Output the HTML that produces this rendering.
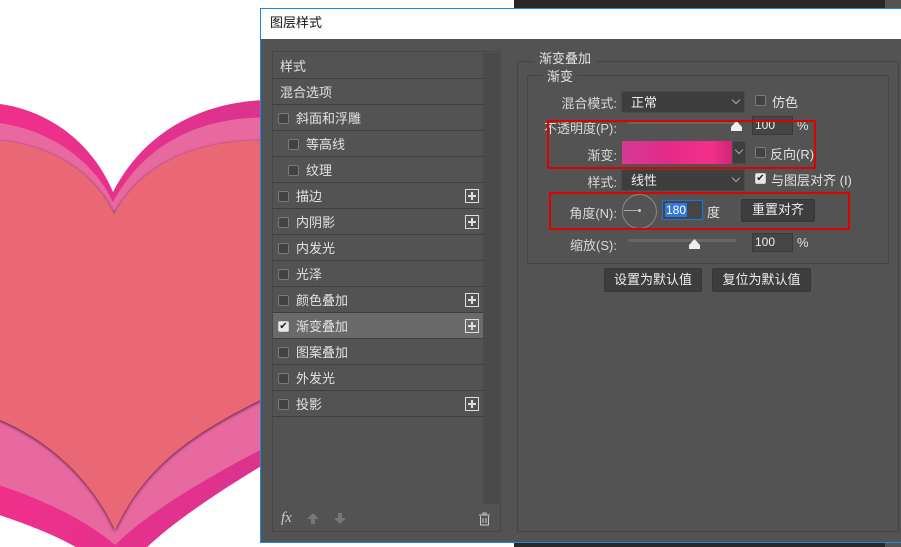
<!DOCTYPE html>
<html><head><meta charset="utf-8"><style>
*{margin:0;padding:0;box-sizing:border-box}
body{width:901px;height:547px;position:relative;overflow:hidden;background:#fff;font-family:"Liberation Sans","Noto Sans CJK SC",sans-serif;font-size:13px;color:#e2e2e2}
.a{position:absolute}
.row{position:absolute;left:273px;width:210px;height:26px;border-bottom:1px solid #3e3e3e;line-height:27px}
.row .cb{top:8px}
.cb{position:absolute;width:11px;height:11px;border:1px solid #7a7a7a;border-radius:2px;background:#424242}
.plus{position:absolute;right:4px;top:6px;width:14px;height:14px;border:1px solid #ddd;}
.plus:before{content:"";position:absolute;left:2px;top:5px;width:8px;height:2px;background:#ddd}
.plus:after{content:"";position:absolute;left:5px;top:2px;width:2px;height:8px;background:#ddd}
.dd{position:absolute;background:#3e3e3e;border:1px solid #4a4a4a;border-radius:2px;line-height:21px;padding-left:9px;color:#eee}
.dd i{position:absolute;right:5px;top:5px;width:6px;height:6px;border-right:1px solid #aaa;border-bottom:1px solid #aaa;transform:rotate(45deg)}
.in{position:absolute;background:#454545;border:1px solid #3a3a3a;line-height:17px;padding-left:2px;font-size:12px;color:#eee}
.btn{position:absolute;background:#3d3d3d;border:1px solid #363636;border-radius:2px;text-align:center;line-height:20px;color:#eee}
.lbl{position:absolute;text-align:right;color:#d8d8d8}
.red{position:absolute;border:2px solid #e00000}
</style></head><body>
<svg class="a" style="left:0;top:0" width="270" height="547">
<defs><linearGradient id="g" x1="0" x2="1"><stop offset="0" stop-color="#f0308a"/><stop offset="1" stop-color="#d9338f"/></linearGradient>
<filter id="s"><feDropShadow dx="0" dy="1" stdDeviation="1.5" flood-color="#3a1020" flood-opacity="0.9"/></filter></defs>
<path d="M113,192 C150,120 220,98 280,100 L280,455 C220,490 160,530 135,560 L95,560 C70,540 30,525 -10,512 L-10,103 C40,106 90,137 113,192Z" fill="url(#g)"/>
<path d="M113,202 C150,134 215,114 280,118 L280,440 C220,470 150,510 115,545 C80,515 30,495 -10,482 L-10,122 C40,126 90,154 113,202Z" fill="#e868a0"/>
<path d="M114,214 C150,152 215,138 280,141 L280,390 C210,425 150,455 115,530 C85,465 30,430 -10,416 L-10,140 C40,142 90,165 114,214Z" fill="#ea6874" filter="url(#s)"/>
</svg>
<div class="a" style="left:514px;top:0;width:371px;height:8px;background:#282828"></div>
<div class="a" style="left:885px;top:0;width:16px;height:8px;background:#535353"></div>
<div class="a" style="left:514px;top:543px;width:371px;height:4px;background:#282828"></div>
<div class="a" style="left:885px;top:543px;width:16px;height:4px;background:#535353"></div>
<div class="a" style="left:260px;top:8px;width:645px;height:535px;border:1px solid #1e88e5;background:#535353">
<div class="a" style="left:0;top:0;width:100%;height:30px;background:#fff;color:#111;font-size:13px;line-height:28px;padding-left:9px">图层样式</div>
</div>
<div class="a" style="left:272px;top:51px;width:229px;height:481px;border:1px solid #474747"></div>
<div class="a" style="left:483px;top:53px;width:16px;height:451px;background:#4a4a4a"></div>
<div class="row" style="top:53px;padding-left:7px">样式</div>
<div class="row" style="top:79px;padding-left:7px">混合选项</div>
<div class="row" style="top:105px"><span class="cb" style="left:5px"></span><span class="a" style="left:23px">斜面和浮雕</span></div>
<div class="row" style="top:131px"><span class="cb" style="left:15px"></span><span class="a" style="left:33px">等高线</span></div>
<div class="row" style="top:157px"><span class="cb" style="left:15px"></span><span class="a" style="left:33px">纹理</span></div>
<div class="row" style="top:183px"><span class="cb" style="left:5px"></span><span class="a" style="left:23px">描边</span><span class="plus"></span></div>
<div class="row" style="top:209px"><span class="cb" style="left:5px"></span><span class="a" style="left:23px">内阴影</span><span class="plus"></span></div>
<div class="row" style="top:235px"><span class="cb" style="left:5px"></span><span class="a" style="left:23px">内发光</span></div>
<div class="row" style="top:261px"><span class="cb" style="left:5px"></span><span class="a" style="left:23px">光泽</span></div>
<div class="row" style="top:287px"><span class="cb" style="left:5px"></span><span class="a" style="left:23px">颜色叠加</span><span class="plus"></span></div>
<div class="row" style="top:313px;background:#6a6a6a"><span class="cb" style="left:5px;background:#e8e8e8;border-color:#ccc;color:#222;font-size:10px;line-height:9px;text-align:center">✔</span><span class="a" style="left:23px">渐变叠加</span><span class="plus"></span></div>
<div class="row" style="top:339px"><span class="cb" style="left:5px"></span><span class="a" style="left:23px">图案叠加</span></div>
<div class="row" style="top:365px"><span class="cb" style="left:5px"></span><span class="a" style="left:23px">外发光</span></div>
<div class="row" style="top:391px"><span class="cb" style="left:5px"></span><span class="a" style="left:23px">投影</span><span class="plus"></span></div>
<div class="a" style="left:281px;top:510px;font-style:italic;font-family:'Liberation Serif',serif;font-size:15px;color:#ccc">fx</div>
<svg class="a" style="left:306px;top:512px" width="40" height="14"><path d="M7,1 L13,7 H9 V12 H5 V7 H1Z" fill="#777"/><path d="M34,12 L40,6 H36 V1 H32 V6 H28Z" fill="#777"/></svg>
<svg class="a" style="left:478px;top:512px" width="14" height="14"><path d="M1,3H12M5,3V1H8V3M2.5,4V13H10.5V4M5,6V11M8,6V11" stroke="#ccc" fill="none"/></svg>
<div class="a" style="left:517px;top:61px;width:382px;height:471px;border:1px solid #454545"></div>
<div class="a" style="left:534px;top:48px;background:#535353;padding:0 5px;font-size:13px">渐变叠加</div>
<div class="a" style="left:527px;top:75px;width:362px;height:189px;border:1px solid #454545"></div>
<div class="a" style="left:543px;top:66px;background:#535353;padding:0 4px;font-size:13px">渐变</div>
<div class="lbl" style="left:530px;top:93px;width:87px">混合模式:</div>
<div class="dd" style="left:621px;top:91px;width:124px;height:22px">正常<i></i></div>
<span class="cb" style="left:755px;top:95px"></span><span class="a" style="left:772px;top:92px">仿色</span>
<div class="lbl" style="left:530px;top:118px;width:87px">不透明度(P):</div>
<div class="a" style="left:628px;top:121px;width:108px;height:3px;background:#666"></div>
<svg class="a" style="left:730px;top:121px" width="13" height="11"><path d="M6.5,0 L12,6 V10 H1 V6Z" fill="#eee"/></svg>
<div class="in" style="left:752px;top:116px;width:41px;height:19px">100</div><span class="a" style="left:797px;top:118px">%</span>
<div class="lbl" style="left:530px;top:145px;width:87px">渐变:</div>
<div class="a" style="left:622px;top:141px;width:111px;height:23px;background:linear-gradient(90deg,#d63a95,#e42a88 40%,#f52e8a 80%,#cc2677)"></div>
<div class="dd" style="left:732px;top:141px;width:14px;height:23px;padding:0"><i style="right:3px"></i></div>
<span class="cb" style="left:755px;top:147px"></span><span class="a" style="left:770px;top:144px">反向(R)</span>
<div class="lbl" style="left:530px;top:172px;width:87px">样式:</div>
<div class="dd" style="left:621px;top:169px;width:124px;height:22px">线性<i></i></div>
<span class="cb" style="left:755px;top:173px;background:#e8e8e8;border-color:#ccc;color:#222;font-size:10px;line-height:9px;text-align:center">✔</span><span class="a" style="left:771px;top:170px">与图层对齐 (I)</span>
<div class="lbl" style="left:530px;top:203px;width:87px">角度(N):</div>
<div class="a" style="left:622px;top:194px;width:35px;height:35px;border:1px solid #888;border-radius:50%"></div>
<div class="a" style="left:624px;top:210px;width:16px;height:1px;background:#aaa"></div>
<div class="a" style="left:638px;top:209px;width:3px;height:3px;background:#ccc;border-radius:50%"></div>
<div class="a" style="left:662px;top:200px;width:41px;height:20px;border:1px solid #1a73e8;background:#454545"><span style="position:absolute;left:2px;top:2px;background:#3478d6;color:#fff;font-size:12px;line-height:14px;padding:0 1px">180</span></div>
<span class="a" style="left:707px;top:202px">度</span>
<div class="btn" style="left:741px;top:199px;width:74px;height:23px">重置对齐</div>
<div class="lbl" style="left:530px;top:235px;width:87px">缩放(S):</div>
<div class="a" style="left:628px;top:239px;width:108px;height:3px;background:#666"></div>
<svg class="a" style="left:688px;top:239px" width="13" height="11"><path d="M6.5,0 L12,6 V10 H1 V6Z" fill="#eee"/></svg>
<div class="in" style="left:752px;top:233px;width:41px;height:19px">100</div><span class="a" style="left:797px;top:235px">%</span>
<div class="btn" style="left:604px;top:268px;width:98px;height:24px;line-height:22px">设置为默认值</div>
<div class="btn" style="left:712px;top:268px;width:99px;height:24px;line-height:22px">复位为默认值</div>
<div class="red" style="left:547px;top:120px;width:269px;height:49px"></div>
<div class="red" style="left:549px;top:192px;width:301px;height:38px"></div>
</body></html>
